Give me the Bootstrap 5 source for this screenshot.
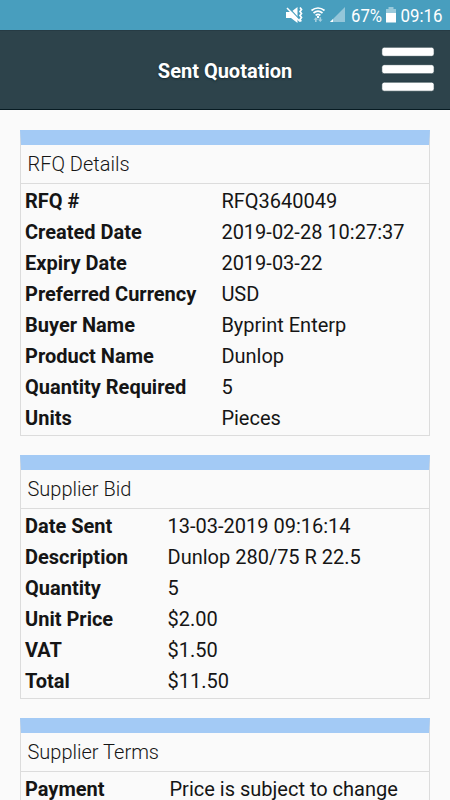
<!DOCTYPE html>
<html lang="en">
<head>
<meta charset="utf-8">
<meta name="viewport" content="width=device-width, initial-scale=1">
<title>Sent Quotation</title>
<link href="https://cdn.jsdelivr.net/npm/bootstrap@5.3.0/dist/css/bootstrap.min.css" rel="stylesheet">
<style>
body { font-family: Roboto, "Liberation Sans", sans-serif; font-size: 20px; line-height: 31px; color: #151515; background: #fafafa; height: 800px; overflow: hidden; }
.status-bar { height: 30px; background: #489ebe; }
.app-bar { height: 80px; background: #2d434b; border-top: 1px solid #263b44; border-bottom: 1px solid #071b22; display: grid; grid-template-columns: 69px 1fr 69px; }
.app-title { font-size: 20px; line-height: 24px; padding-top: 1px; text-shadow: 0 1px 2px #14282f; }
.menu-btn { width: 54px; height: 46px; }
.panels { padding: 20px 20px 0; gap: 19px; }
.panel { border: 1px solid #dcdcdc; border-top: 15px solid #a3caf5; }
.panel-title { height: 39px; padding: 4px 6.500px 0; font-size: 20px; line-height: 30px; font-weight: 300; border-bottom: 1px solid #dcdcdc; }
.panel-rows { padding: 2px 4px 1px; }
.field { display: grid; white-space: nowrap; }
.rfq .field { grid-template-columns: 196.400px 1fr; }
.bid .field { grid-template-columns: 142.500px 1fr; }
.terms .field { grid-template-columns: 144.500px 1fr; }
</style>
</head>
<body>
<header>
  <div class="status-bar">
    <svg class="d-block" width="450" height="30" fill="#fff" font-family="Roboto, sans-serif" font-size="19">
      <path d="M286 12h5l6.500-5v16L291 18h-5z"/>
      <path d="M288.500 7.500l12 13" stroke="#489ebe" stroke-width="1.200" fill="none"/>
      <path d="M287 8l13 13.500" stroke="#fff" stroke-width="1.500" fill="none"/>
      <path d="M300 7.500l1.500 2-1.500 2 1.500 2-1.500 2 1.500 2-1.500 2 1.200 2" stroke="#fff" stroke-width="1.700" fill="none"/>
      <g fill="none" stroke="#fff" stroke-width="1.700">
        <path d="M311.500 10.500q6.500-5 13 0"/>
        <path d="M313.500 13q4.500-3.600 9 0"/>
        <path d="M315.600 15.300q2.400-2 4.800 0"/>
      </g>
      <circle cx="318" cy="17" r="1.200"/>
      <path d="M313.500 19.700l2.300-2.500 2.300 2.500h-1.500v2.200H315v-2.200zM318 19.500h1.500v-2.200h1.600v2.200h1.500l-2.300 2.500z" opacity=".5"/>
      <path d="M345 7v15h-15z" opacity=".42"/>
      <path d="M333 19v3h-3z"/>
      <text x="351" y="22" textLength="31" lengthAdjust="spacingAndGlyphs">67%</text>
      <path d="M388.500 7h5v2h2.500v4h-10V9h2.500z" opacity=".45"/>
      <path d="M386 13h10v9.500h-10z"/>
      <text x="400.500" y="22" textLength="42" lengthAdjust="spacingAndGlyphs">09:16</text>
    </svg>
  </div>
  <nav class="app-bar align-items-center">
    <span></span>
    <h1 class="app-title text-white text-center fw-bold m-0">Sent Quotation</h1>
    <button type="button" class="menu-btn btn p-0 border-0" aria-label="Menu">
      <svg class="d-block" width="54" height="46" fill="#fff" stroke="#173039" stroke-width=".6">
        <rect x=".8" y=".3" width="52.300" height="9" rx="2.500"/>
        <rect x=".8" y="17.700" width="52.300" height="9" rx="2.500"/>
        <rect x=".8" y="35.200" width="52.300" height="9" rx="2.500"/>
      </svg>
    </button>
  </nav>
</header>
<main class="panels d-flex flex-column">
  <section class="panel rfq">
    <h2 class="panel-title m-0">RFQ Details</h2>
    <div class="panel-rows">
      <div class="field"><b>RFQ #</b><span>RFQ3640049</span></div>
      <div class="field"><b>Created Date</b><span>2019-02-28 10:27:37</span></div>
      <div class="field"><b>Expiry Date</b><span>2019-03-22</span></div>
      <div class="field"><b>Preferred Currency</b><span>USD</span></div>
      <div class="field"><b>Buyer Name</b><span>Byprint Enterp</span></div>
      <div class="field"><b>Product Name</b><span>Dunlop</span></div>
      <div class="field"><b>Quantity Required</b><span>5</span></div>
      <div class="field"><b>Units</b><span>Pieces</span></div>
    </div>
  </section>
  <section class="panel bid">
    <h2 class="panel-title m-0">Supplier Bid</h2>
    <div class="panel-rows">
      <div class="field"><b>Date Sent</b><span>13-03-2019 09:16:14</span></div>
      <div class="field"><b>Description</b><span>Dunlop 280/75 R 22.5</span></div>
      <div class="field"><b>Quantity</b><span>5</span></div>
      <div class="field"><b>Unit Price</b><span>$2.00</span></div>
      <div class="field"><b>VAT</b><span>$1.50</span></div>
      <div class="field"><b>Total</b><span>$11.50</span></div>
    </div>
  </section>
  <section class="panel terms">
    <h2 class="panel-title m-0">Supplier Terms</h2>
    <div class="panel-rows">
      <div class="field"><b>Payment</b><span>Price is subject to change</span></div>
    </div>
  </section>
</main>
<script src="https://cdn.jsdelivr.net/npm/bootstrap@5.3.0/dist/js/bootstrap.bundle.min.js"></script>
</body>
</html>
